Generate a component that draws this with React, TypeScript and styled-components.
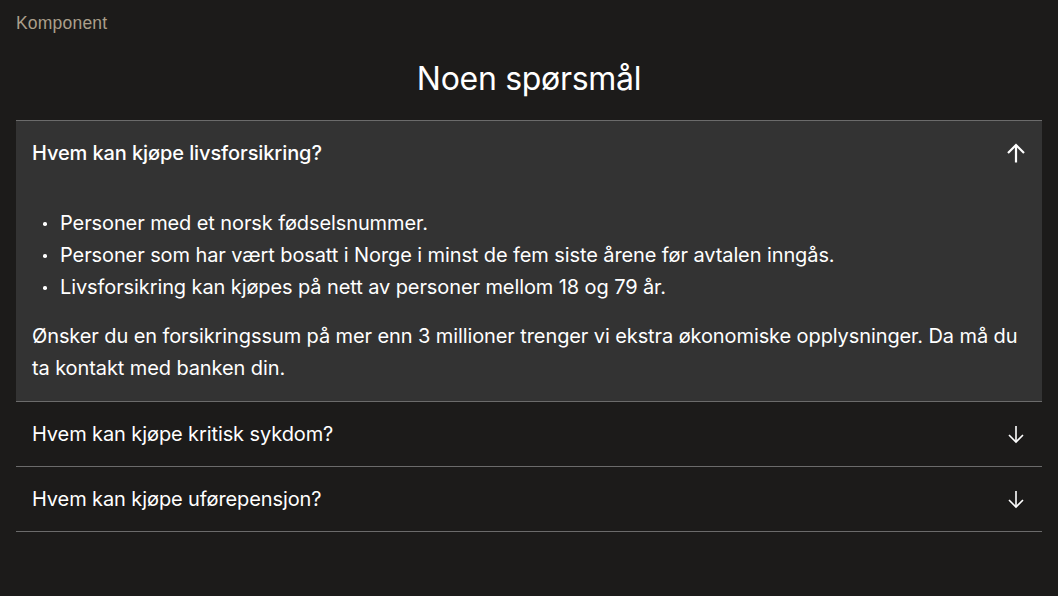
import React, { useState } from "react";
import styled, { createGlobalStyle } from "styled-components";

const Global = createGlobalStyle`
  html, body { margin: 0; padding: 0; background: #1c1b1a; }
  body { font-family: Inter, "Noto Sans", sans-serif; color: #fff; }
`;

const Page = styled.div`
  padding: 12px 16px 40px;
  display: flex;
  flex-direction: column;
`;

const Crumb = styled.div`
  font-family: "Liberation Sans", Arial, sans-serif;
  font-size: 17.5px;
  line-height: 23px;
  letter-spacing: 0.2px;
  color: #ab9f8a;
`;

const Title = styled.h2`
  margin: 21px 0 18px;
  text-align: center;
  font-size: 32px;
  line-height: 46px;
  font-weight: 400;
  letter-spacing: -0.3px;
  color: #fff;
`;

const List = styled.div`
  display: flex;
  flex-direction: column;
  border-top: 1px solid #6b6b6b;
`;

const Item = styled.div<{ $open: boolean }>`
  background: ${(p) => (p.$open ? "#333333" : "transparent")};
  border-bottom: 1px solid #6b6b6b;
`;

const Header = styled.button<{ $open: boolean }>`
  all: unset;
  box-sizing: border-box;
  width: 100%;
  height: 64px;
  padding: 0 16px 0 16px;
  display: flex;
  align-items: center;
  justify-content: space-between;
  cursor: pointer;
  font-family: Inter, "Noto Sans", sans-serif;
  font-size: 20px;
  letter-spacing: -0.1px;
  font-weight: ${(p) => (p.$open ? 500 : 400)};
  color: #fff;
`;

const Body = styled.div`
  padding: 22px 16px 17px;
  font-size: 20px;
  line-height: 32px;
  letter-spacing: -0.1px;
  color: #fff;
`;

const Bullets = styled.ul`
  margin: 0 0 17px;
  padding: 0;
  list-style: none;
`;

const Bullet = styled.li`
  position: relative;
  padding-left: 28px;
  &::before {
    content: "";
    position: absolute;
    left: 11px;
    top: 15px;
    width: 3.5px;
    height: 3.5px;
    border-radius: 50%;
    background: #fff;
  }
`;

const Para = styled.p`
  margin: 0;
`;

const Arrow = ({ up }: { up: boolean }) => (
  <svg width="20" height="20" viewBox="0 0 20 20" fill="none" stroke="#fff" strokeWidth={up ? 2.2 : 1.6}>
    {up ? (
      <>
        <path d="M10 19.5V2" />
        <path d="M2 10l8-8 8 8" />
      </>
    ) : (
      <>
        <path d="M10 2v16" />
        <path d="M3 11l7 7 7-7" />
      </>
    )}
  </svg>
);

const faqs = [
  { q: "Hvem kan kjøpe livsforsikring?" },
  { q: "Hvem kan kjøpe kritisk sykdom?" },
  { q: "Hvem kan kjøpe uførepensjon?" },
];

export default function App() {
  const [open, setOpen] = useState(0);
  return (
    <Page>
      <Global />
      <Crumb>Komponent</Crumb>
      <Title>Noen spørsmål</Title>
      <List>
        {faqs.map((f, i) => (
          <Item key={i} $open={open === i}>
            <Header $open={open === i} onClick={() => setOpen(open === i ? -1 : i)}>
              <span>{f.q}</span>
              <Arrow up={open === i} />
            </Header>
            {open === i && i === 0 && (
              <Body>
                <Bullets>
                  <Bullet>Personer med et norsk fødselsnummer.</Bullet>
                  <Bullet>Personer som har vært bosatt i Norge i minst de fem siste årene før avtalen inngås.</Bullet>
                  <Bullet>Livsforsikring kan kjøpes på nett av personer mellom 18 og 79 år.</Bullet>
                </Bullets>
                <Para>
                  Ønsker du en forsikringssum på mer enn 3 millioner trenger vi ekstra økonomiske opplysninger. Da må du
                  ta kontakt med banken din.
                </Para>
              </Body>
            )}
          </Item>
        ))}
      </List>
    </Page>
  );
}
